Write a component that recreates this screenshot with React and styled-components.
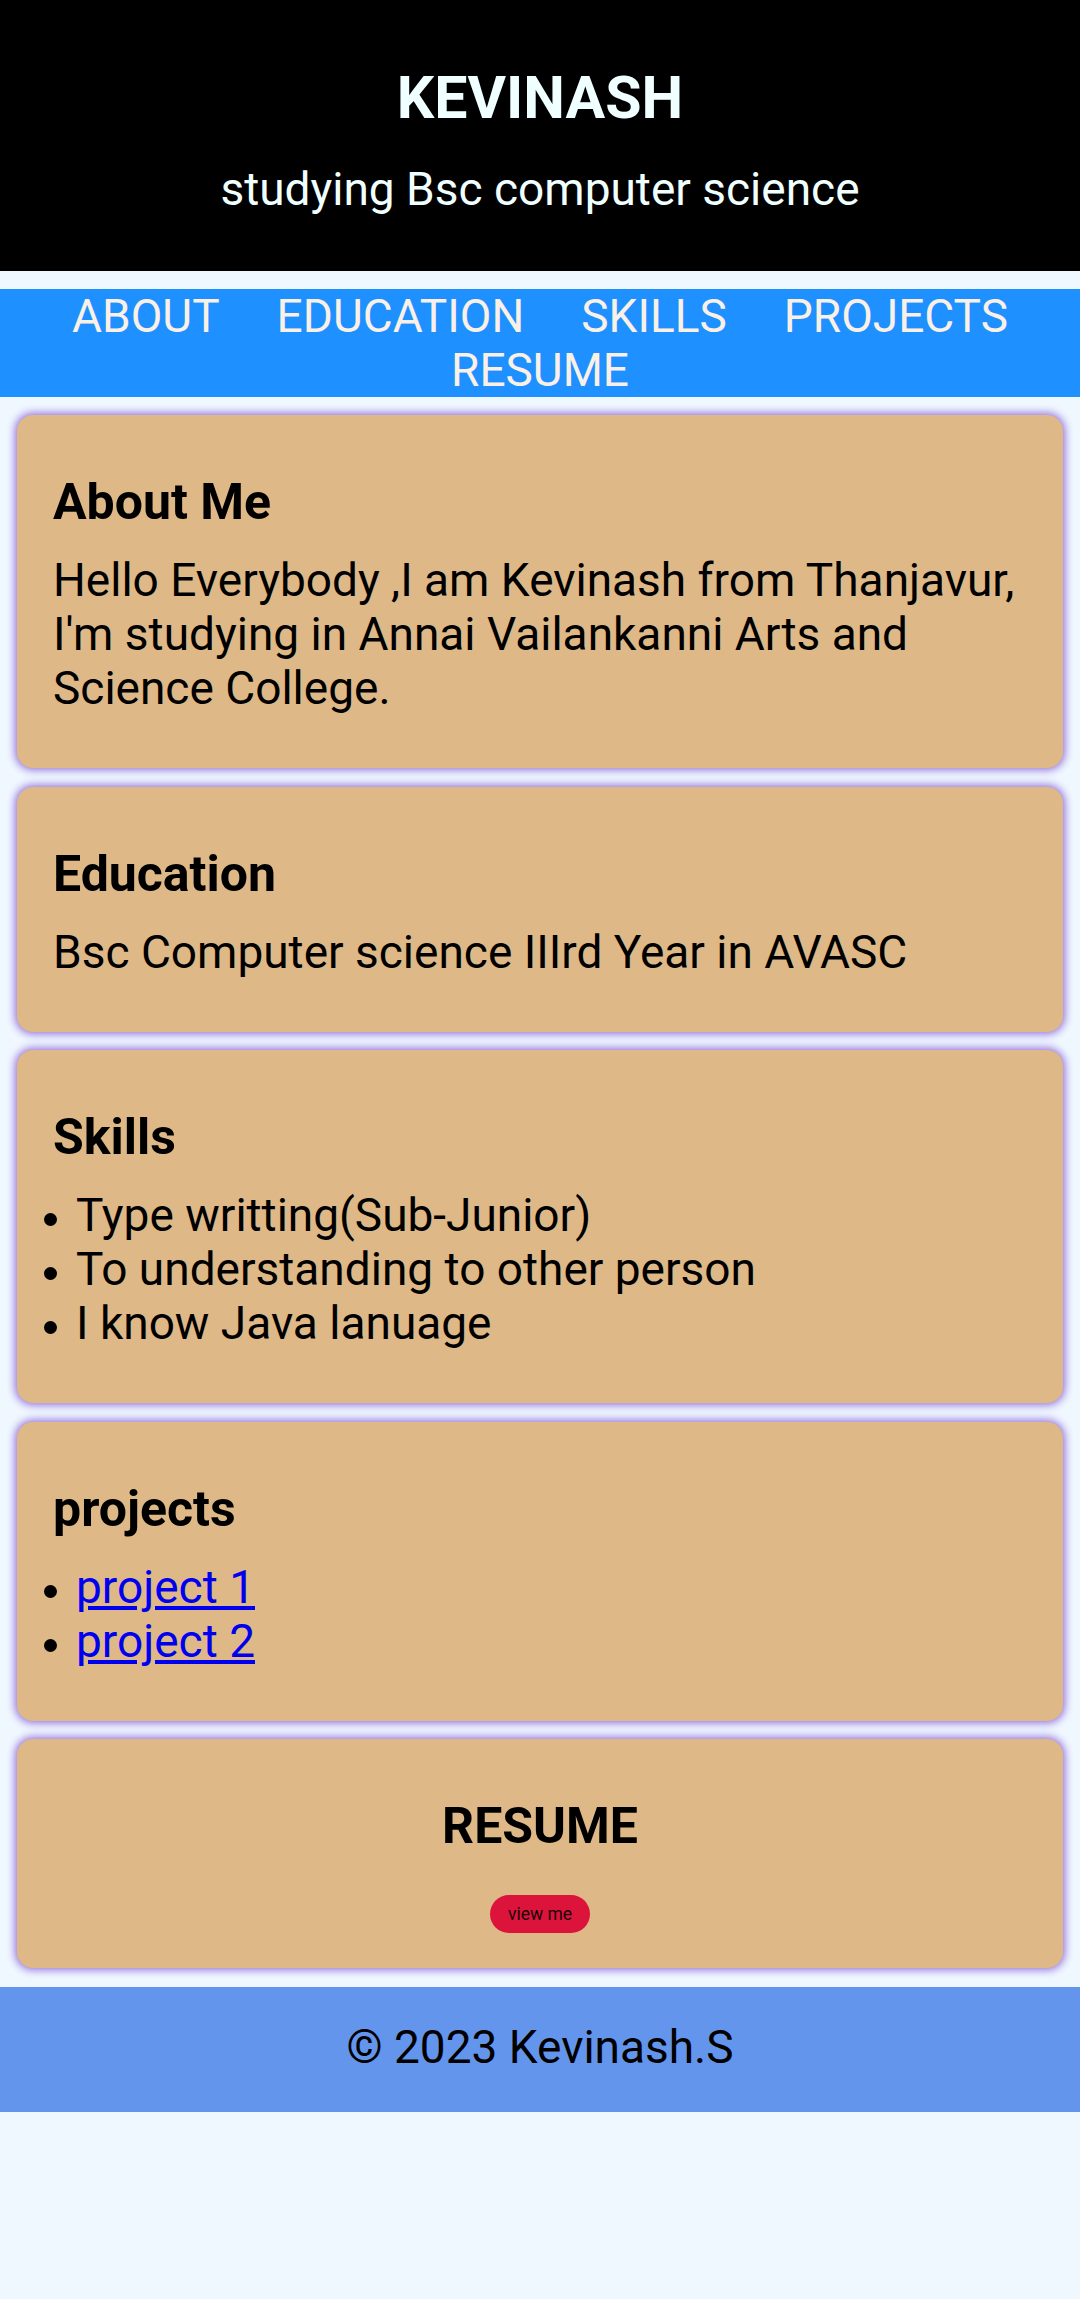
import React from "react";
import styled, { createGlobalStyle } from "styled-components";

const GlobalStyle = createGlobalStyle`
  html, body {
    margin: 0;
    padding: 0;
    background: #f0f8ff;
    font-family: Roboto, "Liberation Sans", Arial, sans-serif;
  }
  * { box-sizing: border-box; }
`;

const Header = styled.header`
  background: #000;
  color: #f0ffff;
  text-align: center;
  padding: 63px 16px 55px;
`;

const Title = styled.h1`
  margin: 0 0 30px;
  font-size: 59px;
  font-weight: 700;
  line-height: 69px;
`;

const Subtitle = styled.p`
  margin: 0;
  font-size: 46px;
  line-height: 54px;
`;

const Nav = styled.nav`
  margin-top: 18px;
  background: #1e90ff;
  display: flex;
  flex-wrap: wrap;
  justify-content: center;
  column-gap: 57px;
`;

const NavLink = styled.a`
  color: #faf0e6;
  text-decoration: none;
  font-size: 46px;
  line-height: 54px;
`;

const Main = styled.main`
  display: flex;
  flex-direction: column;
  gap: 18.5px;
  padding: 18px 17px 19px;
`;

const Card = styled.section`
  background: #deb887;
  border-radius: 16px;
  box-shadow: 0 0 8px 2px #9370db;
  padding: 36px 36px ${(p) => (p.$center ? "35px" : "36px")};
  text-align: ${(p) => (p.$center ? "center" : "left")};
`;

const Heading = styled.h2`
  margin: 22px 0 21px;
  font-size: 50px;
  font-weight: 700;
  line-height: 59px;
  color: #000;
`;

const Text = styled.p`
  margin: 0 0 17px;
  font-size: 46px;
  line-height: 54px;
  color: #000;
`;

const List = styled.ul`
  margin: 0 0 17px;
  padding-left: 23px;
  list-style: none;
  font-size: 46px;
  line-height: 54px;
  color: #000;
`;

const Item = styled.li`
  display: flex;

  &::before {
    content: "";
    flex: none;
    width: 13px;
    height: 13px;
    border-radius: 50%;
    background: #000;
    margin: 25px 19px 0 -32px;
  }
`;

const ProjectLink = styled.a`
  color: #0000ee;
  text-decoration: underline;
`;

const ViewButton = styled.button`
  display: block;
  margin: 39px auto 0;
  height: 38px;
  padding: 0 18px;
  border: none;
  border-radius: 19px;
  background: #dc143c;
  color: #1a0006;
  font-family: Roboto, "Liberation Sans", Arial, sans-serif;
  font-size: 17.5px;
  cursor: pointer;
`;

const Footer = styled.footer`
  background: #6495ed;
  color: #000;
  text-align: center;
  font-size: 46px;
  line-height: 54px;
  padding: 33px 16px 38px;
`;

const navItems = ["ABOUT", "EDUCATION", "SKILLS", "PROJECTS", "RESUME"];

export default function App() {
  return (
    <>
      <GlobalStyle />
      <Header>
        <Title>KEVINASH</Title>
        <Subtitle>studying Bsc computer science</Subtitle>
      </Header>
      <Nav>
        {navItems.map((item) => (
          <NavLink key={item} href={`#${item.toLowerCase()}`}>
            {item}
          </NavLink>
        ))}
      </Nav>
      <Main>
        <Card id="about">
          <Heading>About Me</Heading>
          <Text>
            Hello Everybody ,I am Kevinash from Thanjavur, I'm studying in Annai
            Vailankanni Arts and Science College.
          </Text>
        </Card>
        <Card id="education">
          <Heading>Education</Heading>
          <Text>Bsc Computer science IIIrd Year in AVASC</Text>
        </Card>
        <Card id="skills">
          <Heading>Skills</Heading>
          <List>
            <Item>Type writting(Sub-Junior)</Item>
            <Item>To understanding to other person</Item>
            <Item>I know Java lanuage</Item>
          </List>
        </Card>
        <Card id="projects">
          <Heading>projects</Heading>
          <List>
            <Item>
              <ProjectLink href="#project1">project 1</ProjectLink>
            </Item>
            <Item>
              <ProjectLink href="#project2">project 2</ProjectLink>
            </Item>
          </List>
        </Card>
        <Card id="resume" $center>
          <Heading>RESUME</Heading>
          <ViewButton>view me</ViewButton>
        </Card>
      </Main>
      <Footer>© 2023 Kevinash.S</Footer>
    </>
  );
}
